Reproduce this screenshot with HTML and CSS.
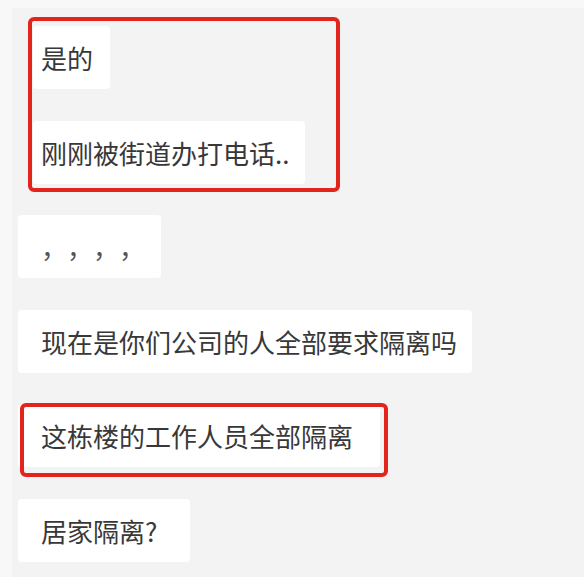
FILE: index.html
```html
<!DOCTYPE html>
<html lang="zh-CN">
<head>
<meta charset="utf-8">
<link rel="stylesheet" href="styles.css">
</head>
<body>
<div class="page">
  <div class="chat">
    <div class="bubble inset w-yes">是的</div>
    <div class="bubble inset w-call">刚刚被街道办打电话..</div>
    <div class="bubble w-commas commas">，，，，</div>
    <div class="bubble w-ask">现在是你们公司的人全部要求隔离吗</div>
    <div class="bubble w-all">这栋楼的工作人员全部隔离</div>
    <div class="bubble w-home">居家隔离?</div>
    <div class="mark mark-one"></div>
    <div class="mark mark-two"></div>
  </div>
</div>
</body>
</html>
```
FILE: styles.css
```css
html, body {
  margin: 0;
  padding: 0;
  background: #f3f3f3;
}
.page {
  width: 584px;
  height: 577px;
  overflow: hidden;
  box-sizing: border-box;
  border-left: 12px solid #f8f8f8;
  border-top: 8px solid #f8f8f8;
  background: #f3f3f3;
}
.chat {
  position: relative;
  display: flex;
  flex-direction: column;
  align-items: flex-start;
  gap: 31.5px;
  padding: 18px 0 0 6px;
}
.bubble {
  height: 63px;
  box-sizing: border-box;
  display: flex;
  align-items: center;
  padding: 0 0 0 23px;
  background: #ffffff;
  border-radius: 4px;
  font-family: "Noto Sans CJK SC", "Noto Sans", sans-serif;
  font-size: 26px;
  color: #383838;
  white-space: nowrap;
  overflow: hidden;
}
.bubble.inset {
  margin-left: 15px;
  padding-left: 8px;
}
.commas {
  text-spacing-trim: space-all;
  color: #555555;
}
.w-yes { width: 77px; }
.w-call { width: 272px; }
.w-commas { width: 143px; }
.w-ask { width: 454px; }
.w-all { width: 362px; }
.w-home { width: 172px; }
.mark {
  position: absolute;
  border: 4px solid #e3241d;
  border-radius: 6px;
  box-sizing: border-box;
}
.mark-one {
  left: 16px;
  top: 9px;
  width: 312px;
  height: 175px;
}
.mark-two {
  left: 8px;
  top: 395px;
  width: 368px;
  height: 74px;
}
```
